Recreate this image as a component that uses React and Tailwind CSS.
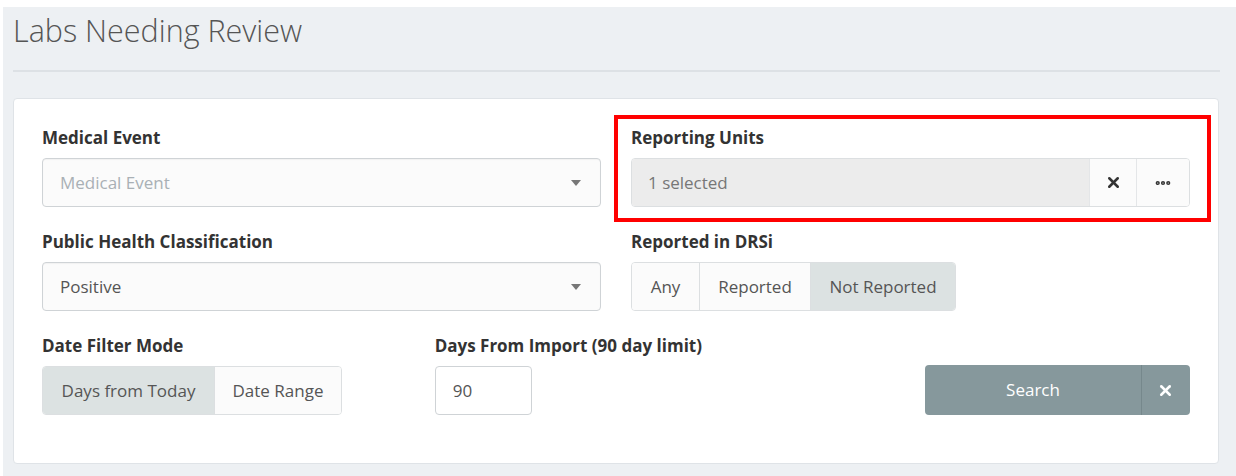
import { X, MoreHorizontal } from "lucide-react";

// Small caret used by the dropdown selects.
function Caret() {
  return (
    <svg width="10" height="6" viewBox="0 0 10 6" className="shrink-0">
      <path d="M0 0h10L5 6z" fill="#777" />
    </svg>
  );
}

function Label({ children }) {
  return (
    <label className="mb-[9px] block text-[17px] leading-[22px] font-bold text-[#333]">
      {children}
    </label>
  );
}

function Select({ value, placeholder }) {
  return (
    <div className="flex h-[49px] items-center justify-between rounded-[4px] border border-[#cfd3d6] bg-[#fbfbfb] pr-[19px] pl-[17px] shadow-[inset_0_1px_1px_rgba(0,0,0,0.04)]">
      <span className={value ? "text-[#555]" : "text-[#a9b0b5]"}>
        {value || placeholder}
      </span>
      <Caret />
    </div>
  );
}

function SegmentGroup({ items, active }) {
  return (
    <div className="flex h-[49px] w-fit overflow-hidden rounded-[4px] border border-[#dcdfe1]">
      {items.map((item, i) => (
        <button
          key={item.label}
          className={`h-full ${item.w} ${i > 0 ? "border-l border-[#dcdfe1]" : ""} ${
            item.label === active ? "bg-[#dce2e2]" : "bg-[#fbfbfb]"
          } text-[#555]`}
        >
          {item.label}
        </button>
      ))}
    </div>
  );
}

export default function App() {
  return (
    <div
      className="min-h-screen bg-white pt-[7px] pl-[3px] text-[17px]"
      style={{ fontFamily: '"Open Sans", "Noto Sans", sans-serif' }}
    >
      <div className="min-h-[469px] bg-[#edf0f3] pr-[16px] pl-[10px]">
        {/* Page heading */}
        <h1 className="pt-[3px] text-[30.5px] leading-[40px] font-light text-[#555]">
          Labs Needing Review
        </h1>
        <hr className="mt-[20px] border-t-2 border-[#dde1e5]" />

        {/* Filter card */}
        <div className="mt-[26px] mr-px rounded-[4px] border border-[#dfe3e7] bg-white px-[28px] pt-[28px] pb-[48px]">
          <div className="grid grid-cols-2 gap-x-[30px] gap-y-[24px]">
            <div>
              <Label>Medical Event</Label>
              <Select placeholder="Medical Event" />
            </div>

            {/* Highlighted reporting units picker */}
            <div className="relative">
              <div className="pointer-events-none absolute -top-[12px] -right-[21px] -bottom-[15px] -left-[17px] border-4 border-[#ff0000]" />
              <Label>Reporting Units</Label>
              <div className="flex h-[49px] overflow-hidden rounded-[4px] border border-[#dcdfe1]">
                <div className="flex flex-1 items-center bg-[#ececec] pl-[16px] text-[#777]">
                  1 selected
                </div>
                <button className="flex w-[47px] items-center justify-center border-l border-[#e4e6e8] bg-[#fbfbfb] text-[#333]">
                  <X size={17} strokeWidth={3.6} />
                </button>
                <button className="flex w-[53px] items-center justify-center border-l border-[#e4e6e8] bg-[#fbfbfb] text-[#333]">
                  <MoreHorizontal size={18} strokeWidth={3.6} />
                </button>
              </div>
            </div>

            <div>
              <Label>Public Health Classification</Label>
              <Select value="Positive" />
            </div>

            <div>
              <Label>Reported in DRSi</Label>
              <SegmentGroup
                active="Not Reported"
                items={[
                  { label: "Any", w: "w-[67px]" },
                  { label: "Reported", w: "w-[111px]" },
                  { label: "Not Reported", w: "w-[145px]" },
                ]}
              />
            </div>
          </div>

          <div className="mt-[24px] grid grid-cols-3 gap-x-[30px]">
            <div>
              <Label>Date Filter Mode</Label>
              <SegmentGroup
                active="Days from Today"
                items={[
                  { label: "Days from Today", w: "w-[171px]" },
                  { label: "Date Range", w: "w-[127px]" },
                ]}
              />
            </div>

            <div>
              <Label>Days From Import (90 day limit)</Label>
              <input
                defaultValue="90"
                className="h-[49px] w-[97px] rounded-[4px] border border-[#cfd3d6] bg-white pl-[17px] text-[#555] outline-none"
              />
            </div>

            <div className="flex items-end justify-end">
              <div className="flex h-[50px] w-[265px] overflow-hidden rounded-[4px] bg-[#86989c] text-white">
                <button className="flex-1">Search</button>
                <button className="flex w-[49px] items-center justify-center border-l border-[#76888c]">
                  <X size={17} strokeWidth={3.6} />
                </button>
              </div>
            </div>
          </div>
        </div>
      </div>
    </div>
  );
}
